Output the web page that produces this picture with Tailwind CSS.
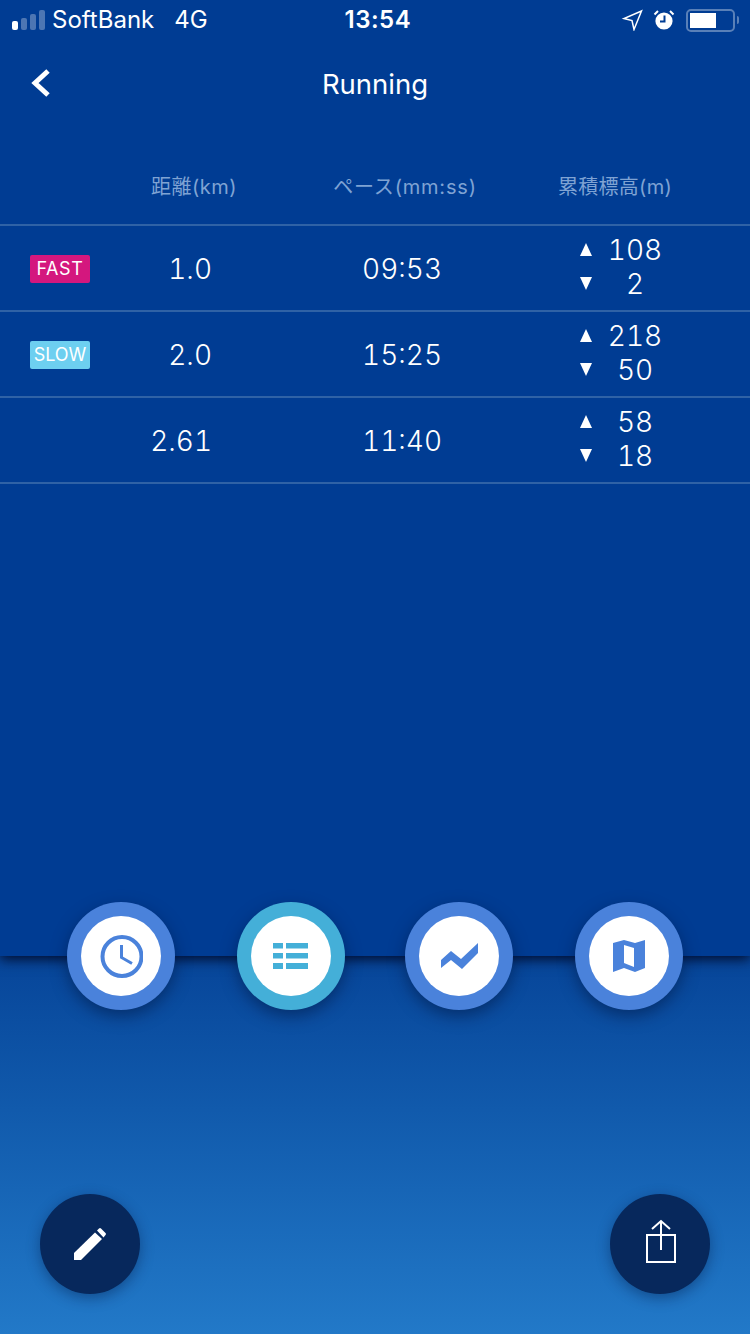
<!DOCTYPE html>
<html lang="ja">
<head>
    <meta charset="UTF-8">
    <meta name="viewport" content="width=device-width, initial-scale=1.0">
    <title>Running</title>
    <script src="https://cdn.jsdelivr.net/npm/@tailwindcss/browser@4"></script>
</head>
<body class="w-[750px] h-[1334px] overflow-hidden bg-[#003c93] text-white font-['Inter','Noto_Sans_CJK_JP',sans-serif]">
    <div class="relative z-10 h-[956px] bg-[#003c93] shadow-[0_3px_12px_rgba(0,10,40,1)]">
        <!-- status bar -->
        <div class="h-[40px] flex items-center pl-[12px] pr-[11px] relative">
            <div class="flex items-end gap-[3px] h-[20px] w-[34px]">
                <div class="w-[6px] h-[9px] rounded-[2px] bg-white"></div>
                <div class="w-[6px] h-[12px] rounded-[2px] bg-white/30"></div>
                <div class="w-[6px] h-[16px] rounded-[2px] bg-white/30"></div>
                <div class="w-[6px] h-[20px] rounded-[2px] bg-white/30"></div>
            </div>
            <span class="ml-[6px] text-[24px] leading-none">SoftBank</span>
            <span class="ml-[20px] text-[24px] leading-none">4G</span>
            <span class="flex-1 text-center text-[24px] font-semibold leading-none pr-[73px] tracking-[0.5px]">13:54</span>
            <svg width="22" height="22" viewBox="0 0 22 22" class="mr-[10px]"><path d="M20.500 2 3 9.500l8 2 2 9Z" fill="none" stroke="white" stroke-width="1.500"/></svg>
            <svg width="22" height="22" viewBox="0 0 22 22" class="mr-[11px]"><circle cx="11" cy="12" r="8.600" fill="white"/><path d="M11.500 6.500v6H7" fill="none" stroke="#003c93" stroke-width="2"/><path d="M1.500 5.500 5 2M20.500 5.500 17 2" stroke="white" stroke-width="2"/></svg>
            <div class="w-[49px] h-[23px] rounded-[5px] border-2 border-white/35 p-[2px] pr-[0]">
                <div class="w-[26px] h-[15px] bg-white"></div>
            </div>
            <div class="ml-[2px] w-[2px] h-[8px] bg-white/35 rounded-r-[2px]"></div>
        </div>
        <!-- nav -->
        <div class="h-[88px] flex items-center justify-center relative">
            <svg width="24" height="32" viewBox="0 0 24 32" class="absolute left-[29px] top-[27px]"><path d="M19 4 6 16l13 12" fill="none" stroke="white" stroke-width="5"/></svg>
            <span class="text-[27.500px] leading-none pt-[1px]">Running</span>
        </div>
        <!-- header -->
        <div class="h-[96px] pt-[47px] flex text-[20px] leading-[24px] text-[#7fa3d3]">
            <div class="w-[100px]"></div>
            <div class="w-[188px] text-center tracking-[0.5px]">距離(km)</div>
            <div class="w-[234px] text-center tracking-[0.8px]">ペース(mm:ss)</div>
            <div class="w-[186px] text-center tracking-[0.3px]">累積標高(m)</div>
        </div>
        <!-- rows -->
        <div class="border-t-2 border-[#2f62a6]">
            <div class="h-[86px] pt-[2px] border-b-2 border-[#2f62a6] flex items-center text-[28px] font-light tabular-nums">
                <div class="w-[100px] pl-[30px]"><div class="w-[60px] h-[28px] rounded-[2px] bg-[#d4177e] text-[18px] font-normal leading-[28px] text-center tracking-[0.6px]">FAST</div></div>
                <div class="w-[112px] text-right">1.0</div>
                <div class="w-[230px] text-right">09:53</div>
                <div class="ml-[153px] w-[80px] -mt-[4px] flex flex-col text-center leading-[34px]">
                    <div class="relative">108<svg width="12" height="13" viewBox="0 0 12 13" class="absolute left-[-15px] top-[10px]"><path d="M6 0 12 13H0Z" fill="white"/></svg></div>
                    <div class="relative">2<svg width="12" height="13" viewBox="0 0 12 13" class="absolute left-[-15px] top-[10px]"><path d="M6 13 12 0H0Z" fill="white"/></svg></div>
                </div>
            </div>
            <div class="h-[86px] pt-[2px] border-b-2 border-[#2f62a6] flex items-center text-[28px] font-light tabular-nums">
                <div class="w-[100px] pl-[30px]"><div class="w-[60px] h-[28px] rounded-[2px] bg-[#6dcff0] text-[18px] font-normal leading-[28px] text-center tracking-[0px]">SLOW</div></div>
                <div class="w-[112px] text-right">2.0</div>
                <div class="w-[230px] text-right">15:25</div>
                <div class="ml-[153px] w-[80px] -mt-[4px] flex flex-col text-center leading-[34px]">
                    <div class="relative">218<svg width="12" height="13" viewBox="0 0 12 13" class="absolute left-[-15px] top-[10px]"><path d="M6 0 12 13H0Z" fill="white"/></svg></div>
                    <div class="relative">50<svg width="12" height="13" viewBox="0 0 12 13" class="absolute left-[-15px] top-[10px]"><path d="M6 13 12 0H0Z" fill="white"/></svg></div>
                </div>
            </div>
            <div class="h-[86px] pt-[2px] border-b-2 border-[#2f62a6] flex items-center text-[28px] font-light tabular-nums">
                <div class="w-[100px]"></div>
                <div class="w-[112px] text-right">2.61</div>
                <div class="w-[230px] text-right">11:40</div>
                <div class="ml-[153px] w-[80px] -mt-[4px] flex flex-col text-center leading-[34px]">
                    <div class="relative">58<svg width="12" height="13" viewBox="0 0 12 13" class="absolute left-[-15px] top-[10px]"><path d="M6 0 12 13H0Z" fill="white"/></svg></div>
                    <div class="relative">18<svg width="12" height="13" viewBox="0 0 12 13" class="absolute left-[-15px] top-[10px]"><path d="M6 13 12 0H0Z" fill="white"/></svg></div>
                </div>
            </div>
        </div>
    </div>
    <!-- lower panel -->
    <div class="h-[378px] bg-gradient-to-b from-[#074599] to-[#2279c8]">
        <div class="relative z-20 flex pl-[67px] -translate-y-[54px]">
            <div class="w-[108px] h-[108px] rounded-full bg-[#4a82db] flex items-center justify-center shadow-[0_6px_16px_rgba(0,20,60,0.5)]">
                <div class="w-[80px] h-[80px] rounded-full bg-white flex items-center justify-center">
                    <svg width="44" height="44" viewBox="0 0 44 44"><circle cx="23" cy="22.500" r="19.500" fill="none" stroke="#4a82db" stroke-width="4"/><path d="M22.500 11v12.500l10.500 6" fill="none" stroke="#4a82db" stroke-width="3"/></svg>
                </div>
            </div>
            <div class="ml-[62px] w-[108px] h-[108px] rounded-full bg-[#44afd8] flex items-center justify-center shadow-[0_6px_16px_rgba(0,20,60,0.5)]">
                <div class="w-[80px] h-[80px] rounded-full bg-white flex items-center justify-center">
                    <svg width="36" height="28" viewBox="0 0 36 28" fill="#44afd8"><rect x="0" y="1" width="10" height="5.500"/><rect x="13" y="1" width="22" height="5.500"/><rect x="0" y="11" width="10" height="5.500"/><rect x="13" y="11" width="22" height="5.500"/><rect x="0" y="21" width="10" height="6"/><rect x="13" y="21" width="22" height="6"/></svg>
                </div>
            </div>
            <div class="ml-[60px] w-[108px] h-[108px] rounded-full bg-[#4a82db] flex items-center justify-center shadow-[0_6px_16px_rgba(0,20,60,0.5)]">
                <div class="w-[80px] h-[80px] rounded-full bg-white flex items-center justify-center">
                    <svg width="38" height="28" viewBox="0 0 38 28" class="ml-[1px] mt-[2px]"><path d="M0 17 10 8l10 8L37 0v10L21 26 10 17 0 25Z" fill="#4a82db"/></svg>
                </div>
            </div>
            <div class="ml-[62px] w-[108px] h-[108px] rounded-full bg-[#4a82db] flex items-center justify-center shadow-[0_6px_16px_rgba(0,20,60,0.5)]">
                <div class="w-[80px] h-[80px] rounded-full bg-white flex items-center justify-center">
                    <svg width="34" height="34" viewBox="0 0 34 34"><path fill-rule="evenodd" d="M1 4 12 1l11 3 10-3v28l-10 4-11-4-11 4ZM12 6v18l10 4V9Z" fill="#4a82db"/></svg>
                </div>
            </div>
        </div>
        <div class="flex justify-between px-[40px] mt-[130px]">
            <div class="w-[100px] h-[100px] rounded-full bg-[#07285c] flex items-center justify-center shadow-[0_4px_14px_rgba(0,20,60,0.4)]">
                <svg width="32" height="32" viewBox="0 0 32 32" fill="white"><path d="M0 32V25L21 4.500l7 6.500L7 32Z"/><path d="M23 2.500 25 .5a1.500 1.500 0 0 1 2 0L31.500 5a1.500 1.500 0 0 1 0 2L29.500 9.500Z"/></svg>
            </div>
            <div class="w-[100px] h-[100px] rounded-full bg-[#07285c] flex items-center justify-center shadow-[0_4px_14px_rgba(0,20,60,0.4)]">
                <svg width="34" height="50" viewBox="0 0 34 50" fill="none" stroke="white" stroke-width="2"><path d="M4 16h28v27H4Z"/><path d="M18 31V2M9 10l9-8 9 8"/></svg>
            </div>
        </div>
    </div>
</body>
</html>
